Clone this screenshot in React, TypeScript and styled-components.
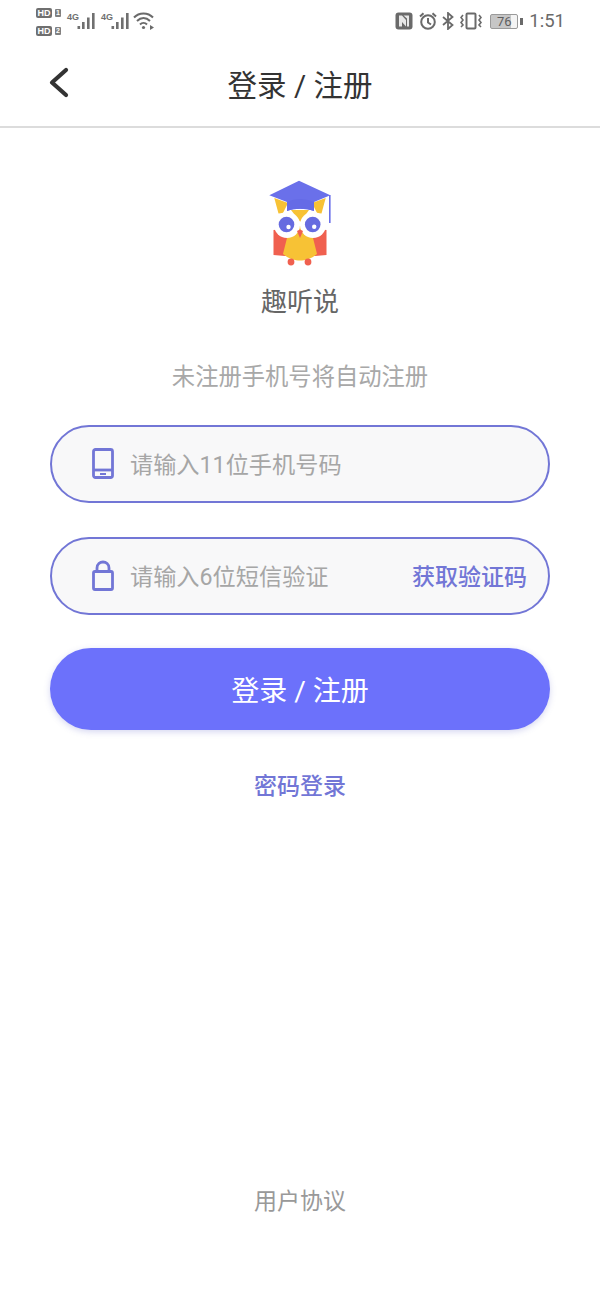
import React from 'react';
import styled, { createGlobalStyle } from 'styled-components';

const GlobalStyle = createGlobalStyle`
  html, body {
    margin: 0;
    padding: 0;
    background: #fff;
    font-family: Roboto, "Noto Sans CJK SC", sans-serif;
  }
`;

const Page = styled.div`
  width: 600px;
  height: 1300px;
  display: flex;
  flex-direction: column;
  overflow: hidden;
  background: #fff;
`;

const StatusBar = styled.div`
  height: 42px;
  flex: none;
  display: flex;
  align-items: center;
  justify-content: space-between;
  padding: 0 35px 0 36px;
  color: #6a6a6a;
`;

const StatusGroup = styled.div`
  display: flex;
  align-items: center;
`;

const SimLabels = styled.div`
  display: flex;
  flex-direction: column;
  gap: 8px;
  margin-right: 6px;
  margin-top: 1px;
`;

const SimLabel = styled.div`
  display: flex;
  align-items: center;
  gap: 3px;
`;

const HdBadge = styled.span`
  width: 16px;
  height: 10px;
  background: #6f6f6f;
  border-radius: 2px;
  color: #fff;
  font-family: "Liberation Sans", sans-serif;
  font-size: 9px;
  font-weight: 700;
  line-height: 10px;
  text-align: center;
`;

const SimNumber = styled.span`
  width: 6px;
  height: 8px;
  background: #808080;
  border-radius: 1px;
  color: #fff;
  font-family: "Liberation Sans", sans-serif;
  font-size: 7px;
  font-weight: 700;
  line-height: 8px;
  text-align: center;
`;

const Signal = styled.div`
  position: relative;
  width: 28px;
  height: 20px;
  margin-right: 6px;
`;

const NetLabel = styled.span`
  position: absolute;
  left: 0;
  top: 2px;
  font-family: "Liberation Sans", sans-serif;
  font-size: 9px;
  font-weight: 700;
  line-height: 9px;
  color: #707070;
`;

const WifiIcon = styled.svg`
  margin-left: -2px;
`;

const RightIcons = styled(StatusGroup)``;

const StatusIcon = styled.svg<{ $gap: number }>`
  margin-right: ${props => props.$gap}px;
`;

const Battery = styled.div`
  box-sizing: border-box;
  width: 28px;
  height: 15px;
  border: 1px solid #9a9a9a;
  border-radius: 2px;
  background: linear-gradient(to right, #c6c6c6 76%, #f4f4f4 76%);
  color: #5e5e5e;
  font-family: Roboto, sans-serif;
  font-size: 13px;
  line-height: 13px;
  text-align: center;
  position: relative;
  &::after {
    content: '';
    position: absolute;
    right: -6px;
    top: 3px;
    width: 3px;
    height: 7px;
    background: #6a6a6a;
  }
`;

const Clock = styled.span`
  margin-left: 11px;
  font-family: Roboto, sans-serif;
  font-size: 18.5px;
  color: #6a6a6a;
`;

const NavBar = styled.header`
  height: 84px;
  flex: none;
  display: flex;
  align-items: center;
  justify-content: center;
  position: relative;
  border-bottom: 2px solid #dcdcdc;
`;

const BackButton = styled.div`
  position: absolute;
  left: 46px;
  top: 22px;
  width: 28px;
  height: 36px;
`;

const NavTitle = styled.h1`
  margin: 4px 0 0;
  font-size: 29.5px;
  font-weight: 400;
  line-height: 36px;
  color: #333;
`;

const Content = styled.main`
  flex: 1;
  display: flex;
  flex-direction: column;
  align-items: center;
  padding: 52px 50px 0;
`;

const AppName = styled.div`
  margin-top: 14px;
  font-size: 26px;
  line-height: 40px;
  color: #666;
`;

const Hint = styled.p`
  margin: 38px 0 31px;
  font-size: 23.3px;
  line-height: 34px;
  color: #a8a8a8;
`;

const Field = styled.div`
  box-sizing: border-box;
  width: 500px;
  height: 78px;
  flex: none;
  margin-bottom: 34px;
  display: flex;
  align-items: center;
  padding: 0 21px 0 40px;
  border: 2px solid #7276d6;
  border-radius: 39px;
  background: #f8f8f9;
`;

const FieldIcon = styled.svg`
  width: 22px;
  height: 32px;
  flex: none;
  margin-right: 16px;
`;

const Placeholder = styled.span`
  flex: 1;
  margin-top: -2px;
  font-size: 23.2px;
  color: #a6a6a6;
  white-space: nowrap;
`;

const CodeLink = styled.span`
  margin-top: -2px;
  font-size: 23px;
  font-weight: 500;
  color: #7276d6;
`;

const SubmitButton = styled.button`
  width: 500px;
  height: 82px;
  flex: none;
  margin-top: -1px;
  border: 0;
  border-radius: 41px;
  background: #6c71fb;
  box-shadow: 0 2px 6px rgba(90, 94, 200, 0.25);
  color: #fff;
  font-family: inherit;
  font-size: 28px;
  font-weight: 400;
`;

const PasswordLink = styled.a`
  margin-top: 40px;
  font-size: 23px;
  font-weight: 500;
  line-height: 34px;
  color: #7276d6;
`;

const Footer = styled.footer`
  flex: none;
  padding-bottom: 81px;
  text-align: center;
  font-size: 23px;
  line-height: 34px;
  color: #999;
`;

const SignalBars = () => (
  <svg width="28" height="20" viewBox="0 0 28 20" fill="#707070">
    <rect x="10.5" y="15" width="2.6" height="3" />
    <rect x="15" y="11" width="2.6" height="7" />
    <rect x="20" y="6.5" width="2.6" height="11.5" />
    <rect x="25" y="2" width="2.6" height="16" />
  </svg>
);

const Owl = () => (
  <svg width="66" height="88" viewBox="0 0 66 88">
    <path d="M6.5 50 L25 48 L25 76 L18 76 L6.5 75 Z" fill="#f0604f" />
    <path d="M59.5 50 L41 48 L41 76 L48 76 L59.5 75 Z" fill="#f0604f" />
    <path d="M23 46 L43 46 L50 74 C44 79 38 80.5 33 80.5 C28 80.5 22 79 16 74 Z" fill="#f7c235" />
    <path d="M7.3 18 L21 23 L16 33 L11.5 33.5 Z" fill="#f7c235" />
    <path d="M58.7 18 L45 23 L50 33 L54.5 33.5 Z" fill="#f7c235" />
    <path d="M24 30 L42 30 L33.3 42 Z" fill="#f7c235" />
    <circle cx="20" cy="45" r="13" fill="#fff" />
    <circle cx="46" cy="45" r="13" fill="#fff" />
    <circle cx="19.5" cy="44.5" r="7.8" fill="#666be0" />
    <circle cx="45.7" cy="44.5" r="7.8" fill="#666be0" />
    <circle cx="21.5" cy="47" r="2.2" fill="#fff" />
    <circle cx="47.2" cy="46.7" r="2.2" fill="#fff" />
    <path d="M30 51 L33 49.5 L36 51 L33 58 Z" fill="#f0604f" />
    <circle cx="24" cy="82" r="3.4" fill="#f0604f" />
    <circle cx="41" cy="82" r="3.4" fill="#f0604f" />
    <path d="M32 0.7 L63.3 15.3 L47 22 L47 31 C38 28 28 28 20 31 L20 22 L2.3 15.3 Z" fill="#6a70ea" />
    <path d="M20 22 C28 18 38 18 47 22 L47 31 C38 28 28 28 20 31 Z" fill="#656be6" />
    <rect x="62" y="15" width="1.6" height="28" fill="#6a70ea" />
  </svg>
);

function App() {
  return (
    <>
      <GlobalStyle />
      <Page>
        <StatusBar>
          <StatusGroup>
            <SimLabels>
              <SimLabel><HdBadge>HD</HdBadge><SimNumber>1</SimNumber></SimLabel>
              <SimLabel><HdBadge>HD</HdBadge><SimNumber>2</SimNumber></SimLabel>
            </SimLabels>
            <Signal><NetLabel>4G</NetLabel><SignalBars /></Signal>
            <Signal><NetLabel>4G</NetLabel><SignalBars /></Signal>
            <WifiIcon width="22" height="18" viewBox="0 0 22 18" fill="none" stroke="#6a6a6a" strokeWidth="2">
              <path d="M1 5.5 C6 0 15 0 20 5.5" />
              <path d="M4 9 C8 5 13 5 17 9" />
              <path d="M7 12.5 C9 10.5 12 10.5 14 12.5" />
              <circle cx="10.5" cy="15.5" r="1.6" fill="#6a6a6a" stroke="none" />
              <path d="M17 13 L21 15.5 L17 18 Z" fill="#6a6a6a" stroke="none" />
            </WifiIcon>
          </StatusGroup>
          <RightIcons>
            <StatusIcon $gap={6} width="18" height="18" viewBox="0 0 18 18">
              <rect x="0.5" y="0.5" width="17" height="17" rx="3" fill="#6a6a6a" />
              <path d="M4 3.5 H7 L11 8 V14.5 L7 10 V14.5 H4 Z M8.5 3.5 H14 V14.5 H12 V6.5 L8.5 3.5 Z" fill="#e8e8e8" />
            </StatusIcon>
            <StatusIcon $gap={5} width="18" height="18" viewBox="0 0 18 18" fill="none" stroke="#6a6a6a" strokeWidth="2">
              <circle cx="9" cy="10" r="6.8" />
              <path d="M9 6 V10.5 L12 12.5 M1 4.5 L4.5 1.3 M17 4.5 L13.5 1.3" />
            </StatusIcon>
            <StatusIcon $gap={6} width="12" height="18" viewBox="0 0 12 18" fill="none" stroke="#6a6a6a" strokeWidth="1.8">
              <path d="M1 5 L10.5 13 L6 17 V1 L10.5 5 L1 13" />
            </StatusIcon>
            <StatusIcon $gap={8} width="22" height="18" viewBox="0 0 22 18" fill="none" stroke="#6a6a6a" strokeWidth="1.6">
              <rect x="6.5" y="1.5" width="9" height="15" rx="1" strokeWidth="2" />
              <path d="M3 3 L1 5.5 L3 8 L1 10.5 L3 13 L1 15 M19 3 L21 5.5 L19 8 L21 10.5 L19 13 L21 15" />
            </StatusIcon>
            <Battery>76</Battery>
            <Clock>1:51</Clock>
          </RightIcons>
        </StatusBar>
        <NavBar>
          <BackButton>
            <svg width="28" height="36" viewBox="0 0 28 36" fill="none" stroke="#333" strokeWidth="4.2" strokeLinecap="round" strokeLinejoin="round">
              <path d="M20 6 L6 18.5 L20 31" />
            </svg>
          </BackButton>
          <NavTitle>登录 / 注册</NavTitle>
        </NavBar>
        <Content>
          <Owl />
          <AppName>趣听说</AppName>
          <Hint>未注册手机号将自动注册</Hint>
          <Field>
            <FieldIcon viewBox="0 0 22 32" fill="none" stroke="#7276d6" strokeWidth="2.8">
              <rect x="1.5" y="1.5" width="19" height="28" rx="2" />
              <path d="M2 22 H20" />
              <path d="M8 26 H14" strokeWidth="2" />
            </FieldIcon>
            <Placeholder>请输入11位手机号码</Placeholder>
          </Field>
          <Field>
            <FieldIcon viewBox="0 0 22 32" fill="none" stroke="#7276d6" strokeWidth="2.8">
              <rect x="1.5" y="11.5" width="19" height="18" rx="1.5" />
              <path d="M5 11 V8 C5 0 17 0 17 8 V11" />
            </FieldIcon>
            <Placeholder>请输入6位短信验证</Placeholder>
            <CodeLink>获取验证码</CodeLink>
          </Field>
          <SubmitButton>登录 / 注册</SubmitButton>
          <PasswordLink>密码登录</PasswordLink>
        </Content>
        <Footer>用户协议</Footer>
      </Page>
    </>
  );
}

export default App;
